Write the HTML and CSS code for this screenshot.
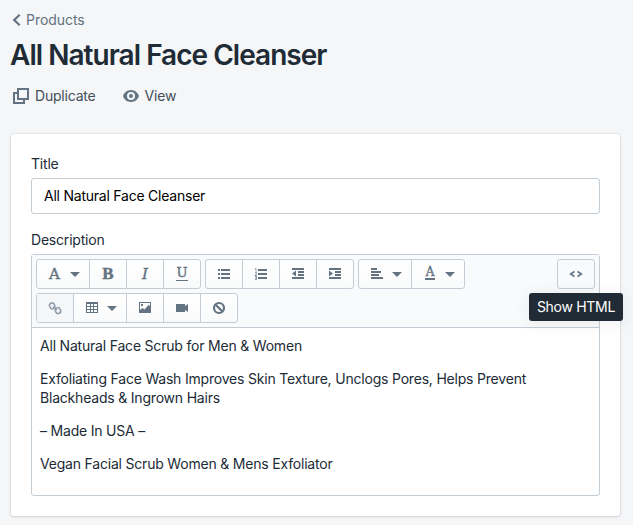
FILE: index.html
```html
<!DOCTYPE html>
<html lang="en">
<head>
<meta charset="utf-8">
<title>All Natural Face Cleanser</title>
<link rel="stylesheet" href="styles.css">
</head>
<body>
<header class="header">
  <a class="back"><svg width="10" height="14" viewBox="0 0 10 14"><path d="M8.700 1.700 3.200 7l5.500 5.300" fill="none" stroke="#637381" stroke-width="2.200"/></svg><span>Products</span></a>
  <h1>All Natural Face Cleanser</h1>
  <div class="actions">
    <a class="action duplicate"><svg width="16" height="16" viewBox="0 0 16 16" fill="none" stroke="#637381" stroke-width="2"><path d="M5 1h10v10H5zM5 5H1v10h10v-4"/></svg><span>Duplicate</span></a>
    <a class="action view"><svg width="16" height="12" viewBox="0 0 16 12"><path fill="#637381" fill-rule="evenodd" d="M8 0C3.8 0 1 3 0 6c1 3 3.800 6 8 6s7-3 8-6c-1-3-3.800-6-8-6zm0 2a4 4 0 1 1 0 8 4 4 0 0 1 0-8zm0 2a2 2 0 1 0 0 4 2 2 0 0 0 0-4z"/></svg><span>View</span></a>
  </div>
</header>
<main class="card">
  <label class="label">Title</label>
  <div class="input">All Natural Face Cleanser</div>
  <label class="label description">Description</label>
  <section class="editor">
    <div class="toolbar">
      <div class="row">
        <div class="group">
          <button class="wide"><span class="glyph font">A</span><i class="caret"></i></button>
          <button><span class="glyph bold">B</span></button>
          <button><span class="glyph italic">I</span></button>
          <button><span class="glyph underline">U</span></button>
        </div>
        <div class="group">
          <button><svg viewBox="0 0 36 28"><path d="M12 9h2v2h-2zm0 4h2v2h-2zm0 4h2v2h-2zM15 9h9v2h-9zm0 4h9v2h-9zm0 4h9v2h-9z"/></svg></button>
          <button><svg viewBox="0 0 36 28"><path d="M15 9h9v2h-9zm0 4h9v2h-9zm0 4h9v2h-9z"/><path class="thin" d="M12 8.500h1v3M12 12.500h1.500v1L12 15.500h2M12 16.500h1.500v3H12M12 18h1.500"/></svg></button>
          <button><svg viewBox="0 0 36 28"><path d="M12 8h12v2H12zm6 3h6v2h-6zm0 3h6v2h-6zm-6 3h12v2H12zM16 10.500v6L12 13.500z"/></svg></button>
          <button><svg viewBox="0 0 36 28"><path d="M12 8h12v2H12zm6 3h6v2h-6zm0 3h6v2h-6zm-6 3h12v2H12zM12 10.500v6l4-3z"/></svg></button>
        </div>
        <div class="group">
          <button class="wide"><svg viewBox="0 0 52 28"><path d="M12 8h6v2h-6zm0 3h10v2H12zm0 3h8v2h-8zm0 3h12v2H12z"/></svg><i class="caret"></i></button>
          <button class="wide"><span class="glyph color">A</span><i class="caret"></i></button>
        </div>
        <div class="group html">
          <button><svg viewBox="0 0 36 28"><path class="code" d="m16.500 11.500-4 2.500 4 2.500m3-5 4 2.500-4 2.500"/></svg><span class="tooltip">Show HTML</span></button>
        </div>
      </div>
      <div class="row">
        <div class="group">
          <button class="disabled"><svg viewBox="0 0 36 28"><g class="link"><rect x="12.700" y="9" width="5" height="6" rx="2.500" transform="rotate(-25 15 12)"/><rect x="18.200" y="13.500" width="5" height="6" rx="2.500" transform="rotate(-25 21 16)"/><path d="m16 12.500 4 3.500"/></g></svg></button>
          <button class="wide"><svg viewBox="0 0 52 28"><path fill-rule="evenodd" d="M12 8h12v11H12zm1 2v2h3v-2zm4 0v2h2v-2zm3 0v2h3v-2zm-7 3v2h3v-2zm4 0v2h2v-2zm3 0v2h3v-2zm-7 3v2h3v-2zm4 0v2h2v-2zm3 0v2h3v-2z"/></svg><i class="caret"></i></button>
          <button><svg viewBox="0 0 36 28"><path fill-rule="evenodd" d="M12 8h12v11H12zm1 1v7l2.500-2 2 1.500 4-4.500 1.500 1V9zm1 1h2v2h-2z"/></svg></button>
          <button><svg viewBox="0 0 36 28"><path d="M12 10h9v2l3-2v8l-3-2v2h-9z"/></svg></button>
          <button><svg viewBox="0 0 36 28"><g class="clear"><circle cx="18" cy="14" r="5"/><path d="m14.500 10.500 7 7"/></g></svg></button>
        </div>
      </div>
    </div>
    <div class="content">
      <p>All Natural Face Scrub for Men &amp; Women</p>
      <p>Exfoliating Face Wash Improves Skin Texture, Unclogs Pores, Helps Prevent<br>Blackheads &amp; Ingrown Hairs</p>
      <p>– Made In USA –</p>
      <p>Vegan Facial Scrub Women &amp; Mens Exfoliator</p>
    </div>
  </section>
</main>
</body>
</html>
```
FILE: styles.css
```css
* { box-sizing: border-box; }
body {
  margin: 0;
  height: 525px;
  overflow: hidden;
  background: #f4f6f8;
  color: #212b36;
  font: 14px/20px Inter, sans-serif;
  letter-spacing: -.2px;
}
svg { display: block; flex: none; }
.header { height: 134px; padding: 10px 11px 0; }
.back { display: flex; align-items: center; gap: 5px; color: #637381; letter-spacing: -.05px; }
h1 { margin: 9px 0 0 -1px; font-size: 28px; line-height: 32px; font-weight: 600; letter-spacing: -.97px; white-space: nowrap; }
.actions { display: flex; gap: 27px; margin: 15px 0 0 2px; color: #454f5b; }
.action { display: flex; align-items: center; gap: 6px; }
.card {
  width: 609px;
  height: 382px;
  margin-left: 11px;
  padding: 20px 20px 0;
  background: #fff;
  border-radius: 3px;
  box-shadow: 0 0 0 1px rgba(63,63,68,.06), 0 1px 3px rgba(63,63,68,.16);
}
.label { display: block; height: 24px; }
.input {
  height: 36px;
  padding: 7px 12px;
  border: 1px solid #c4cdd5;
  border-radius: 3px;
  color: #000;
  letter-spacing: -.23px;
}
.description { margin-top: 16px; }
.editor { height: 242px; border: 1px solid #c4cdd5; border-radius: 3px; }
.toolbar { height: 73px; padding: 4px; background: #f9fafb; border-bottom: 1px solid #c4cdd5; }
.row { display: flex; gap: 4px; height: 34px; }
.group {
  display: flex;
  height: 30px;
  border: 1px solid #c4cdd5;
  border-radius: 3px;
  background: linear-gradient(#fff, #f9fafb);
}
button {
  display: flex;
  align-items: center;
  position: relative;
  width: 36px;
  height: 28px;
  padding: 0;
  border: 0;
  background: none;
  color: #637381;
}
button + button { width: 37px; border-left: 1px solid #c4cdd5; }
button.wide { width: 52px; }
button + button.wide { width: 53px; }
button svg { width: 36px; height: 28px; fill: #637381; }
.wide svg { width: 52px; }
.wide svg + .caret { margin-left: -19px; }
.caret { border: 5px solid transparent; border-top-color: #637381; border-bottom: 0; }
.glyph {
  width: 36px;
  font: 14px/28px "DejaVu Serif", serif;
  letter-spacing: 0;
  text-align: center;
  -webkit-text-stroke: .4px #637381;
}
.font { width: 33px; padding-left: 2px; font-size: 15px; }
.bold { font: bold 17px/28px "Liberation Serif", serif; }
.italic { font-size: 15px; font-style: italic; }
.underline { width: 12px; height: 13px; margin: 1px 0 0 12px; border-bottom: 1px solid #637381; font-size: 13px; line-height: 10px; }
.color { width: 10px; height: 12px; margin: 0 10px 0 13px; border-bottom: 2px solid #637381; font-size: 12px; line-height: 9px; }
.thin { fill: none; stroke: #637381; stroke-width: .7; }
.code { fill: none; stroke: #637381; stroke-width: 1.5; }
.link { fill: none; stroke: #919eab; stroke-width: 1.5; }
.clear { fill: none; stroke: #637381; stroke-width: 2.2; }
.disabled { background: #f4f6f8; }
.html { margin-left: auto; background: #f9fafb; }
.tooltip {
  position: absolute;
  top: 33px;
  left: -29px;
  z-index: 1;
  width: 94px;
  height: 28px;
  border-radius: 3px;
  background: #212b36;
  box-shadow: 0 2px 16px rgba(33,43,54,.08);
  color: #fff;
  font: 14px/28px Inter, sans-serif;
  letter-spacing: -.3px;
  white-space: nowrap;
}
.content { padding: 8px; line-height: 19px; }
.content p { margin: 0 0 14px; white-space: nowrap; }
```
